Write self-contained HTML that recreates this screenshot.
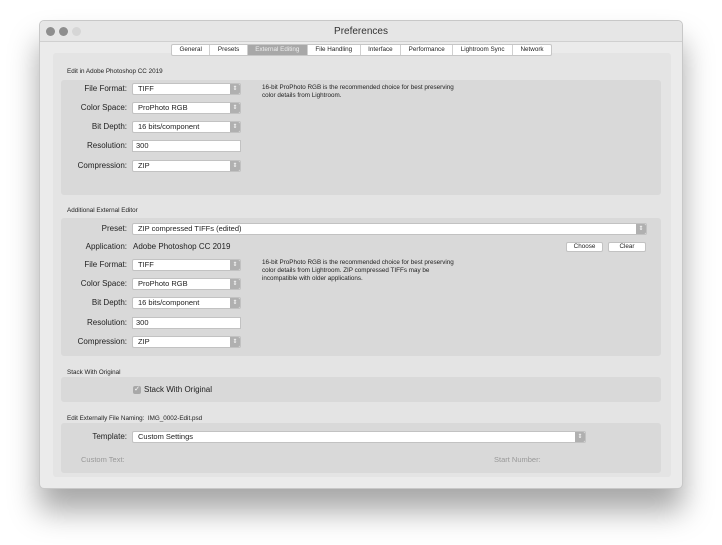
<!DOCTYPE html>
<html><head><meta charset="utf-8"><style>
*{margin:0;padding:0;box-sizing:border-box}
body{width:722px;height:545px;background:#fff;position:relative;overflow:hidden;font-family:"Liberation Sans",sans-serif;color:#222}
.win{position:absolute;left:39px;top:20px;width:644px;height:469px;background:#ebebeb;border:1px solid #c8c8c8;border-radius:5px;box-shadow:0 22px 30px rgba(0,0,0,.35)}
.title{position:absolute;left:0;top:0;width:100%;height:21px;background:#e6e6e6;border-bottom:1px solid #d0d0d0;border-radius:5px 5px 0 0;text-align:center;font-size:10px;line-height:21px;color:#333}
.dot{position:absolute;top:6px;width:9px;height:9px;border-radius:50%}
.a{position:absolute}
.panel{position:absolute;left:13px;top:32px;width:618px;height:424px;background:#e4e4e4;border-radius:3px}
.tabs{position:absolute;left:171px;top:44px;height:12px;display:flex;border:1px solid #c6c6c6;background:#fff;font-size:6.3px;line-height:10px;border-radius:2px}
.tabs span{padding:0 7.5px;border-right:1px solid #d0d0d0;color:#222}
.tabs span.s{background:#a8a8a8;color:#eee}
.grp{position:absolute;left:61px;width:600px;background:#d9d9d9;border-radius:3px}
.gl{position:absolute;left:67px;font-size:6.3px;color:#222}
.lb{position:absolute;width:120px;left:7px;text-align:right;font-size:8px;color:#222}
.sel{position:absolute;left:132px;width:109px;height:12px;background:#fff;border:1px solid #c2c2c2;border-radius:2px;font-size:7.5px;line-height:10px;padding-left:5px}
.sel .ar{position:absolute;right:0;top:0;width:10px;height:10px;background:#b0b0b0;color:#fff;font-size:6px;line-height:10px;text-align:center;border-radius:0 2px 2px 0}
.inp{position:absolute;left:132px;width:109px;height:12px;background:#fff;border:1px solid #c2c2c2;font-size:7.5px;line-height:10px;padding-left:3px}
.note{position:absolute;left:262px;font-size:6.3px;line-height:8px;color:#222}
.btn{position:absolute;top:242px;height:10px;background:#fff;border:1px solid #c2c2c2;border-radius:2px;font-size:6.3px;line-height:8px;text-align:center}
</style></head><body>
<div class="win">
<div class="title">Preferences</div>
<div class="dot" style="left:6px;background:#8e8e8e"></div>
<div class="dot" style="left:19px;background:#8e8e8e"></div>
<div class="dot" style="left:32px;background:#d6d6d6"></div>
<div class="panel"></div>
</div>
<div class="tabs"><span>General</span><span>Presets</span><span class="s">External Editing</span><span>File Handling</span><span>Interface</span><span>Performance</span><span>Lightroom Sync</span><span style="border:0">Network</span></div>

<div class="gl" style="top:68px">Edit in Adobe Photoshop CC 2019</div>
<div class="grp" style="top:80px;height:115px"></div>
<div class="lb" style="top:84px">File Format:</div><div class="sel" style="top:83px">TIFF<div class="ar">⇕</div></div>
<div class="lb" style="top:103px">Color Space:</div><div class="sel" style="top:102px">ProPhoto RGB<div class="ar">⇕</div></div>
<div class="lb" style="top:122px">Bit Depth:</div><div class="sel" style="top:121px">16 bits/component<div class="ar">⇕</div></div>
<div class="lb" style="top:141px">Resolution:</div><div class="inp" style="top:140px">300</div>
<div class="lb" style="top:161px">Compression:</div><div class="sel" style="top:160px">ZIP<div class="ar">⇕</div></div>
<div class="note" style="top:84px">16-bit ProPhoto RGB is the recommended choice for best preserving<br>color details from Lightroom.</div>

<div class="gl" style="top:207px">Additional External Editor</div>
<div class="grp" style="top:218px;height:138px"></div>
<div class="lb" style="top:224px">Preset:</div><div class="sel" style="top:223px;width:515px">ZIP compressed TIFFs (edited)<div class="ar">⇕</div></div>
<div class="lb" style="top:242px">Application:</div><div class="a" style="left:133px;top:242px;font-size:8px">Adobe Photoshop CC 2019</div>
<div class="btn" style="left:566px;width:37px">Choose</div><div class="btn" style="left:608px;width:38px">Clear</div>
<div class="lb" style="top:260px">File Format:</div><div class="sel" style="top:259px">TIFF<div class="ar">⇕</div></div>
<div class="lb" style="top:279px">Color Space:</div><div class="sel" style="top:278px">ProPhoto RGB<div class="ar">⇕</div></div>
<div class="lb" style="top:298px">Bit Depth:</div><div class="sel" style="top:297px">16 bits/component<div class="ar">⇕</div></div>
<div class="lb" style="top:318px">Resolution:</div><div class="inp" style="top:317px">300</div>
<div class="lb" style="top:337px">Compression:</div><div class="sel" style="top:336px">ZIP<div class="ar">⇕</div></div>
<div class="note" style="top:259px">16-bit ProPhoto RGB is the recommended choice for best preserving<br>color details from Lightroom. ZIP compressed TIFFs may be<br>incompatible with older applications.</div>

<div class="gl" style="top:369px">Stack With Original</div>
<div class="grp" style="top:377px;height:25px"></div>
<div class="a" style="left:133px;top:386px;width:8px;height:8px;background:#a8a8a8;border-radius:2px;color:#fff;font-size:7px;line-height:8px;text-align:center">✓</div>
<div class="a" style="left:144px;top:385px;font-size:8px">Stack With Original</div>

<div class="gl" style="top:415px">Edit Externally File Naming:&nbsp; IMG_0002-Edit.psd</div>
<div class="grp" style="top:423px;height:50px"></div>
<div class="lb" style="top:432px">Template:</div><div class="sel" style="top:431px;width:454px">Custom Settings<div class="ar">⇕</div></div>
<div class="a" style="left:81px;top:455px;font-size:7.5px;color:#999">Custom Text:</div>
<div class="a" style="left:494px;top:455px;font-size:7.5px;color:#999">Start Number:</div>
</body></html>
